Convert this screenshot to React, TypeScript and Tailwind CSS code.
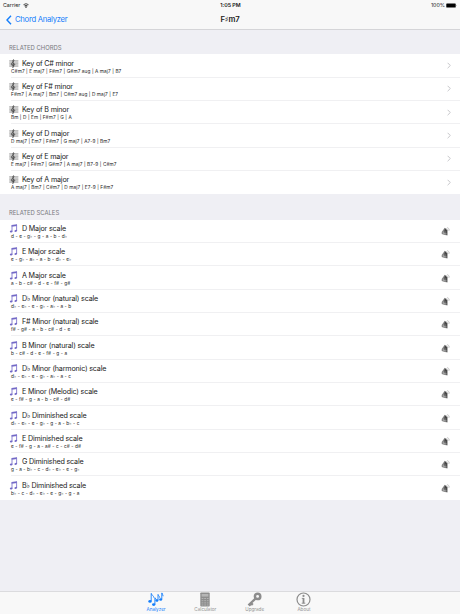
import type { ReactNode } from "react";

const chords = [
  { title: "Key of C# minor", notes: "C#m7 | E maj7 | F#m7 | G#m7 aug | A maj7 | B7" },
  { title: "Key of F# minor", notes: "F#m7 | A maj7 | Bm7 | C#m7 aug | D maj7 | E7" },
  { title: "Key of B minor", notes: "Bm | D | Em | F#m7 | G | A" },
  { title: "Key of D major", notes: "D maj7 | Em7 | F#m7 | G maj7 | A7-9 | Bm7" },
  { title: "Key of E major", notes: "E maj7 | F#m7 | G#m7 | A maj7 | B7-9 | C#m7" },
  { title: "Key of A major", notes: "A maj7 | Bm7 | C#m7 | D maj7 | E7-9 | F#m7" },
];

const scales = [
  { title: "D Major scale", notes: "d - e - g♭ - g - a - b - d♭" },
  { title: "E Major scale", notes: "e - g♭ - a♭ - a - b - d♭ - e♭" },
  { title: "A Major scale", notes: "a - b - c# - d - e - f# - g#" },
  { title: "D♭ Minor (natural) scale", notes: "d♭ - e♭ - e - g♭ - a♭ - a - b" },
  { title: "F# Minor (natural) scale", notes: "f# - g# - a - b - c# - d - e" },
  { title: "B Minor (natural) scale", notes: "b - c# - d - e - f# - g - a" },
  { title: "D♭ Minor (harmonic) scale", notes: "d♭ - e♭ - e - g♭ - a♭ - a - c" },
  { title: "E Minor (Melodic) scale", notes: "e - f# - g - a - b - c# - d#" },
  { title: "D♭ Diminished scale", notes: "d♭ - e♭ - e - g♭ - g - a - b♭ - c" },
  { title: "E Diminished scale", notes: "e - f# - g - a - a# - c - c# - d#" },
  { title: "G Diminished scale", notes: "g - a - b♭ - c - d♭ - e♭ - e - g♭" },
  { title: "B♭ Diminished scale", notes: "b♭ - c - d♭ - e♭ - e - g♭ - g - a" },
];

function StaffIcon() {
  return (
    <svg viewBox="0 0 10 9" className="h-[9px] w-[10px]" fill="none">
      <path d="M.3 1h9v6.8h-9z" fill="#d6d6d6" />
      <path d="M.3 1.5h9M.3 3h9M.3 4.5h9M.3 6h9M.3 7.5h9" stroke="#a8a8a8" strokeWidth=".5" />
      <path
        d="M3.3 8.1c.6.6 1.4.3 1.3-.5L3.9 1.8C3.8.7 4.8.2 4.9 1.3c.1 1.4-2.5 2.2-2.5 4.1 0 1.7 3.3 1.7 3.3.1 0-1.3-2.1-1.3-2.1 0"
        stroke="#444"
        strokeWidth=".85"
        strokeLinecap="round"
      />
    </svg>
  );
}

function NotesIcon() {
  return (
    <svg viewBox="0 0 9 9" className="h-[9px] w-[9px]" fill="#7268c6">
      <path d="m2.6.9 5.4-.6v1.8l-5.4.6z" />
      <path d="M3 1.3v6M7.6.8v5.9" stroke="#8178ce" strokeWidth=".9" />
      <ellipse cx="2.2" cy="7.5" rx="1.4" ry="1" transform="rotate(-15 2.2 7.5)" />
      <ellipse cx="6.8" cy="6.9" rx="1.4" ry="1" transform="rotate(-15 6.8 6.9)" />
    </svg>
  );
}

function SpeakerIcon() {
  return (
    <svg viewBox="0 0 9 9" className="mt-[1.5px] mr-[10px] h-[9px] w-[9px] shrink-0" fill="none">
      <path d="M3.7.7.7 5.1v1.9l2.1.7 3.7.8V3.3z" fill="#858585" />
      <path d="M4 1.2 3 5.5l3.1 2.5V3.6z" fill="#444" />
      <path d="m1.8 5.4 3.4-.4M2 6.7l3.7-.3" stroke="#c4c4c4" strokeWidth=".5" />
      <path d="M5.4 1.4c1.1.4 1.7 1.2 1.8 2.5M6.1.5C7.6 1 8.3 2 8.4 3.5" stroke="#999" strokeWidth=".5" />
    </svg>
  );
}

function Chevron() {
  return (
    <svg viewBox="0 0 4 7" className="mr-[9px] h-[7px] w-1 shrink-0" fill="none">
      <path d="m.6.8 2.7 2.7L.6 6.2" stroke="#c1c1c5" strokeWidth=".9" />
    </svg>
  );
}

function Row({
  title,
  notes,
  icon,
  accessory,
  last,
}: {
  title: string;
  notes: string;
  icon: ReactNode;
  accessory: ReactNode;
  last: boolean;
}) {
  return (
    <li className="h-[23.333px] pl-[11px]">
      <div
        className={`flex h-full items-center justify-between border-b ${
          last ? "border-transparent" : "border-[#f0f0f2]"
        }`}
      >
        <div className="flex flex-col pt-[1.6px]">
          <div className="-ml-[2px] flex items-center">
            <span className="w-[13px] shrink-0">{icon}</span>
            <span className="text-[7.15px] leading-[9px] tracking-[-0.17px] whitespace-nowrap">{title}</span>
          </div>
          <span className="text-[4.75px] leading-[6px] tracking-[0.09px] whitespace-nowrap">{notes}</span>
        </div>
        {accessory}
      </div>
    </li>
  );
}

function SectionTitle({ children }: { children: ReactNode }) {
  return (
    <h2 className="flex items-end pb-[3.7px] pl-[9px] text-[5.9px] leading-[6px] text-[#77777c]">
      {children}
    </h2>
  );
}

function AnalyzerIcon() {
  return (
    <svg viewBox="0 0 16 15" className="h-[15px] w-4" fill="#147efb">
      <path
        d="M3.2 1.3v7.8M3.5 1.5c.2 2 2.2 2.1 2.4 4.2M6.9 5.5v6.8M7.2 6c.3 1.7 1.9 1.6 2 3.3M10 2.3v6M10.2 2.6c.3 1.5 1.6 1.7 1.6 3.2M13.8.8v6.4M14 1c.1 1.5 1.2 1.7 1.2 3.2"
        stroke="#147efb"
        strokeWidth=".9"
        fill="none"
      />
      <ellipse cx="2" cy="9.4" rx="1.7" ry="1.3" />
      <ellipse cx="5.7" cy="12.6" rx="1.7" ry="1.3" />
      <ellipse cx="8.9" cy="8.5" rx="1.5" ry="1.2" />
      <ellipse cx="12.7" cy="7.5" rx="1.5" ry="1.2" />
    </svg>
  );
}

function CalculatorIcon() {
  return (
    <svg viewBox="0 0 10 15" className="h-[15px] w-[10px]">
      <rect x=".3" y=".5" width="9.4" height="14" rx=".8" fill="#8d8d8d" />
      <path d="M1.6 2h6.8v2.6H1.6z" fill="#b5b5b5" />
      <path
        d="M1.6 6.5h1.8m.8 0H6m.8 0h1.8M1.6 8.7h1.8m.8 0H6m.8 0h1.8M1.6 10.9h1.8m.8 0H6m.8 0h1.8M1.6 13h1.8m.8 0H6m.8 0h1.8"
        stroke="#bcbcbc"
        strokeWidth=".8"
      />
    </svg>
  );
}

function KeyIcon() {
  return (
    <svg viewBox="0 0 15 15" className="h-[15px] w-[15px]" fill="none" stroke="#8d8d8d">
      <circle cx="10.6" cy="4.4" r="2.7" strokeWidth="2.5" />
      <path d="m8.5 6.6-7.1 6.7M3.8 10.9l2 2M2 12.2l1.6 1.6" strokeWidth="2.2" />
    </svg>
  );
}

function InfoIcon() {
  return (
    <svg viewBox="0 0 15 15" className="h-[15px] w-[15px]" fill="none" stroke="#8d8d8d">
      <circle cx="7.5" cy="7.5" r="6.5" strokeWidth="1.2" />
      <circle cx="7.5" cy="3.9" r="1.1" fill="#8d8d8d" stroke="none" />
      <path d="M7.5 6v5.4" strokeWidth="1.8" />
      <path d="M5.8 6.4h2M5.7 11.2h3.6" strokeWidth=".9" />
    </svg>
  );
}

const tabs = [
  { label: "Analyzer", icon: AnalyzerIcon, active: true },
  { label: "Calculator", icon: CalculatorIcon, active: false },
  { label: "Upgrade", icon: KeyIcon, active: false },
  { label: "About", icon: InfoIcon, active: false },
];

export default function App() {
  return (
    <div className="flex h-[614px] w-[460px] flex-col overflow-hidden bg-[#efeff4] font-['Inter','DejaVu_Sans',sans-serif] text-[#202020]">
      <header className="h-[29.5px] shrink-0 border-b border-[#d5d5d8] bg-[#f8f8f8]">
        <div className="grid h-[10px] grid-cols-3 items-center px-[3px] text-[5.3px] leading-[6px]">
          <div className="flex items-center gap-[3px]">
            Carrier
            <svg viewBox="0 0 6 5" className="h-[5px] w-[6px]" fill="none" stroke="#222" strokeWidth=".8">
              <path d="M.5 1.7q2.5-2 5 0M1.4 2.9q1.6-1.2 3.2 0" />
              <circle cx="3" cy="4" r=".4" fill="#222" />
            </svg>
          </div>
          <div className="pl-[1px] text-center font-semibold">1:05 PM</div>
          <div className="flex items-center justify-end gap-[1px]">
            100%
            <svg viewBox="0 0 11 5" className="h-[5px] w-[11px]">
              <rect x=".3" y=".5" width="9.4" height="4" rx=".6" fill="#000" />
              <path d="M10.1 1.7q.7.8 0 1.6z" fill="#000" />
            </svg>
          </div>
        </div>
        <div className="grid h-[19px] grid-cols-3 items-center px-[6px]">
          <button
            type="button"
            className="flex items-center gap-[3px] text-[7.7px] leading-[10px] tracking-[-0.28px] whitespace-nowrap text-[#147efb]"
          >
            <svg viewBox="0 0 6 10" className="h-[10px] w-[6px]" fill="none">
              <path d="M5 .8 1 5l4 4.2" stroke="#147efb" strokeWidth="1.4" />
            </svg>
            Chord Analyzer
          </button>
          <h1 className="text-center text-[7.7px] leading-[10px] font-semibold tracking-[-0.1px]">F♯m7</h1>
        </div>
      </header>

      <main className="grow">
        <div className="flex h-[24.8px] flex-col justify-end">
          <SectionTitle>RELATED CHORDS</SectionTitle>
        </div>
        <ul className="bg-white">
          {chords.map((chord, i) => (
            <Row key={chord.title} {...chord} icon={<StaffIcon />} accessory={<Chevron />} last={i === chords.length - 1} />
          ))}
        </ul>
        <div className="flex h-[25.4px] flex-col justify-end">
          <SectionTitle>RELATED SCALES</SectionTitle>
        </div>
        <ul className="bg-white">
          {scales.map((scale, i) => (
            <Row key={scale.title} {...scale} icon={<NotesIcon />} accessory={<SpeakerIcon />} last={i === scales.length - 1} />
          ))}
        </ul>
      </main>

      <footer className="flex h-[23px] shrink-0 justify-center border-t border-[#dbdbde] bg-[#f8f8f8]">
        {tabs.map(({ label, icon: Icon, active }) => (
          <button
            key={label}
            type="button"
            className={`flex w-[49.3px] flex-col items-center text-[4.6px] leading-[6px] ${
              active ? "text-[#147efb]" : "text-[#929292]"
            }`}
          >
            <Icon />
            {label}
          </button>
        ))}
      </footer>
    </div>
  );
}
